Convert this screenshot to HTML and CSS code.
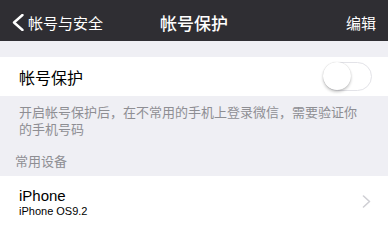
FILE: index.html
```html
<!DOCTYPE html>
<html lang="zh-CN">
<head>
<meta charset="utf-8">
<link rel="stylesheet" href="styles.css">
</head>
<body>
<div class="nav">
  <div class="nav-left">
    <svg class="back" width="12" height="17" viewBox="0 0 12 17"><polyline points="10.5,1 2,8.5 10.5,16" fill="none" stroke="#fff" stroke-width="2.4" stroke-linecap="round" stroke-linejoin="round"/></svg>
    <span>帐号与安全</span>
  </div>
  <div class="nav-title">帐号保护</div>
  <div class="nav-right">编辑</div>
</div>
<div class="cell cell-toggle">
  <span class="cell-label">帐号保护</span>
  <span class="switch"><span class="knob"></span></span>
</div>
<div class="desc">开启帐号保护后，在不常用的手机上登录微信，需要验证你的手机号码</div>
<div class="section-header">常用设备</div>
<div class="cell cell-device">
  <div class="device-text">
    <div class="device-name">iPhone</div>
    <div class="device-os">iPhone OS9.2</div>
  </div>
  <svg class="chev" width="9" height="13" viewBox="0 0 9 13"><polyline points="1.5,1 7.5,6.5 1.5,12" fill="none" stroke="#cfcfd4" stroke-width="1.6" stroke-linecap="round" stroke-linejoin="round"/></svg>
</div>
</body>
</html>
```
FILE: styles.css
```css
html, body {
  margin: 0;
  padding: 0;
}
body {
  width: 388px;
  height: 227px;
  overflow: hidden;
  background: #efeff4;
  font-family: "Liberation Sans", "Noto Sans CJK SC", sans-serif;
}
.nav {
  height: 41px;
  box-sizing: border-box;
  padding-top: 3px;
  background: #2f2e33;
  color: #fff;
  display: flex;
  align-items: center;
  position: relative;
  font-family: "Noto Sans CJK SC", sans-serif;
}
.nav-left {
  display: flex;
  align-items: center;
  font-size: 15px;
  padding-left: 12px;
}
.back {
  margin-right: 4px;
}
.nav-title {
  position: absolute;
  left: 0;
  right: 0;
  top: 3px;
  bottom: 0;
  display: flex;
  align-items: center;
  justify-content: center;
  font-size: 17px;
  font-weight: 500;
}
.nav-right {
  margin-left: auto;
  padding-right: 12px;
  font-size: 15px;
}
.cell {
  background: #fff;
  display: flex;
  align-items: center;
}
.cell-toggle {
  margin-top: 16px;
  height: 39px;
  padding: 0 16px 0 19px;
}
.cell-label {
  font-family: "Noto Sans CJK SC", sans-serif;
  font-size: 16px;
  color: #000;
}
.switch {
  margin-left: auto;
  width: 49px;
  height: 29px;
  box-sizing: border-box;
  border: 1.5px solid #e3e3e8;
  border-radius: 15px;
  background: #fff;
  position: relative;
}
.knob {
  position: absolute;
  left: -1px;
  top: -1px;
  width: 28px;
  height: 28px;
  border-radius: 50%;
  background: #fff;
  box-shadow: 0 2px 3px rgba(0,0,0,0.22), 0 0 1px rgba(0,0,0,0.2);
}
.desc {
  padding: 7px 25px 0 19px;
  font-family: "Noto Sans CJK SC", sans-serif;
  font-size: 13px;
  line-height: 17px;
  color: #8e8e93;
}
.section-header {
  margin-top: 15px;
  padding: 0 0 7px 15px;
  font-family: "Noto Sans CJK SC", sans-serif;
  font-size: 13px;
  line-height: 17px;
  color: #8e8e93;
}
.cell-device {
  height: 51px;
  box-sizing: border-box;
  align-items: flex-start;
  padding: 11px 17px 0 19px;
}
.device-text {
  flex: 1;
}
.device-name {
  font-size: 15px;
  line-height: 18px;
  color: #000;
}
.device-os {
  font-size: 11px;
  line-height: 13px;
  color: #000;
}
.chev {
  margin-top: 8px;
}
```
